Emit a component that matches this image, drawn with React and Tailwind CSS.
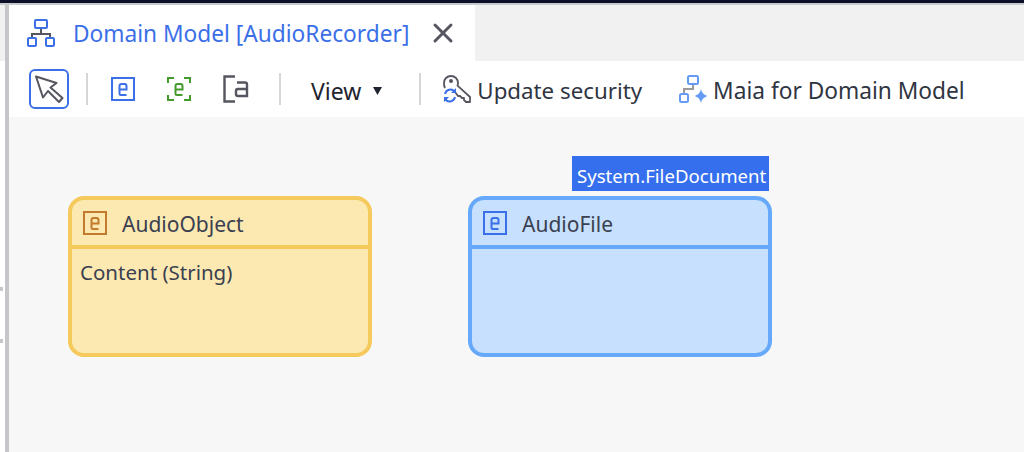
import { X } from 'lucide-react';

const FONT = { fontFamily: '"Noto Sans", sans-serif' };

const E_GLYPH = 'M9 12.5h6.5V9a2 2 0 0 0-2-2h-3A2 2 0 0 0 8.5 9v7.5a1.5 1.5 0 0 0 1.5 1.5h5.5';

// square entity icon with the little "e" inside
function EntityIcon({ color = '#3b6fe8' }) {
  return (
    <svg width="24" height="24" viewBox="0 0 24 24" fill="none" stroke={color} strokeWidth="2" className="shrink-0">
      <rect x="1" y="1" width="22" height="22" />
      <path d={E_GLYPH} />
    </svg>
  );
}

function GreenEntityIcon() {
  return (
    <svg width="24" height="24" viewBox="0 0 24 24" fill="none" stroke="#459a2c" strokeWidth="2" className="shrink-0">
      <path d="M1 6V1h6M17 1h6v5M23 18v5h-6M7 23H1v-5" />
      <path d={E_GLYPH} />
    </svg>
  );
}

function AttributeIcon() {
  return (
    <svg width="26" height="28" viewBox="0 0 26 28" fill="none" stroke="#55565f" strokeWidth="2.4" className="shrink-0">
      <path d="M12 1.5H1.5v25H12" />
      <path d="M14 7.5h8a2 2 0 0 1 2 2V21H15a2 2 0 0 1-2-2v-3a2 2 0 0 1 2-2h9" />
    </svg>
  );
}

function PointerIcon() {
  return (
    <svg width="30" height="30" viewBox="0 0 30 30" fill="none" stroke="#55565f" strokeWidth="2" strokeLinejoin="round">
      <path d="M2 2.5L22.5 9l-6 4.5L28.5 24 25 28 14 17l-5 6.5z" />
    </svg>
  );
}

function SeparatorBar() {
  return <div className="w-[2px] h-8 bg-[#d6d6d6] shrink-0" />;
}

function DomainIcon() {
  return (
    <svg width="28" height="28" viewBox="0 0 28 28" fill="none" className="shrink-0">
      <path d="M14 9v6M5 19v-4h18v4" stroke="#55565f" strokeWidth="2" />
      <rect x="8" y="1" width="12" height="8" rx="1" stroke="#3b6fe8" strokeWidth="2" />
      <rect x="1" y="19" width="8" height="8" rx="1" stroke="#3b6fe8" strokeWidth="2" />
      <rect x="19" y="19" width="8" height="8" rx="1" stroke="#3b6fe8" strokeWidth="2" />
    </svg>
  );
}

function KeyIcon() {
  return (
    <svg width="30" height="30" viewBox="0 0 30 30" fill="none" className="shrink-0">
      <path d="M3 14a9 9 0 0 1-1-5c0-4 3-7 7-7s7 3 7 7c0 1-.2 2-.5 2.7L28 23v5h-4l-2-2v-2h-2l-2-2h-2l-3-4" stroke="#55565f" strokeWidth="1.8" strokeLinejoin="round" />
      <circle cx="9" cy="7" r="2" fill="#55565f" />
      <path d="M3 20a5.5 5.5 0 0 1 9.5-2.5M13 23a5.5 5.5 0 0 1-9.5 2.5" stroke="#3b6fe8" strokeWidth="2" />
      <path d="M14 14v5h-5zM2 28v-5h5z" fill="#3b6fe8" />
    </svg>
  );
}

function MaiaIcon() {
  return (
    <svg width="28" height="28" viewBox="0 0 28 28" fill="none" className="shrink-0">
      <path d="M14 9v5H5v5" stroke="#9a9a9a" strokeWidth="2" />
      <rect x="9" y="1" width="10" height="8" rx="1.5" stroke="#659bf5" strokeWidth="2" />
      <rect x="1" y="19" width="8" height="8" rx="1.5" stroke="#659bf5" strokeWidth="2" />
      <path d="M22 14c1 4 2.5 5.5 6.5 7-4 1.5-5.5 3-6.5 7-1-4-2.5-5.5-6.5-7 4-1.500 5.500-3 6.500-7z" fill="#659bf5" />
    </svg>
  );
}

function EntityCard({ name, attribute, iconColor, className, borderClass, leftClass }) {
  return (
    <div className={`absolute top-[79px] w-[304px] h-[161px] rounded-2xl border-4 flex flex-col ${leftClass} ${className} ${borderClass}`}>
      <div className={`h-[49px] shrink-0 border-b-4 flex items-center pl-[11px] gap-[15px] ${borderClass}`}>
        <EntityIcon color={iconColor} />
        <span className="pt-1 text-[21px] text-[#3a4050]">{name}</span>
      </div>
      {attribute && <p className="pl-2 pt-[9px] text-[20.5px] leading-7 text-[#3a4050]">{attribute}</p>}
    </div>
  );
}

export default function App() {
  return (
    <div className="relative w-[1024px] h-[452px] overflow-hidden flex flex-col bg-[#f7f7f7]" style={FONT}>
      <div className="h-[3px] bg-[#0b1028] shrink-0" />
      <div className="h-[2px] bg-[#c9c9cc] shrink-0" />

      <div className="flex-1 flex min-h-0">
        {/* left gutter */}
        <div className="w-[5px] shrink-0 flex flex-col">
          <div className="h-[56px] bg-[#f1f1f1]" />
          <div className="flex-1 bg-white" />
        </div>
        <div className="w-1 bg-[#c6c6ca] shrink-0" />

        <div className="flex-1 flex flex-col min-w-0">
          {/* tab strip */}
          <div className="h-[56px] shrink-0 bg-[#f1f1f1] flex">
            <div className="w-[466px] bg-white flex items-center pl-[18px]">
              <DomainIcon />
              <span className="ml-[18px] pt-[3px] text-[22.7px] leading-none text-[#3b6fe8] whitespace-nowrap">Domain Model [AudioRecorder]</span>
              <X size={32} strokeWidth={2.2} className="ml-[18px] text-[#55565f] shrink-0" />
            </div>
          </div>

          {/* toolbar */}
          <div className="h-14 shrink-0 bg-white flex items-center pl-5">
            <div className="w-10 h-10 rounded-md border-2 border-[#3b6fe8] flex items-center justify-center shrink-0">
              <PointerIcon />
            </div>
            <div className="ml-[17px]"><SeparatorBar /></div>
            <div className="ml-[23px]"><EntityIcon /></div>
            <div className="ml-8"><GreenEntityIcon /></div>
            <div className="ml-8"><AttributeIcon /></div>
            <div className="ml-[30px]"><SeparatorBar /></div>
            <span className="ml-[30px] pt-1 text-[23px] leading-none text-[#1f2430]">View</span>
            <svg width="9" height="8" viewBox="0 0 9 8" className="ml-3 mt-[3px] shrink-0"><path d="M0 0h9L4.5 8z" fill="#1f2430" /></svg>
            <div className="ml-[37px]"><SeparatorBar /></div>
            <div className="ml-[21px] mr-[5px]"><KeyIcon /></div>
            <span className="pt-1 text-[22.3px] leading-none text-[#2f3542] whitespace-nowrap">Update security</span>
            <div className="ml-[37px] mr-[6px]"><MaiaIcon /></div>
            <span className="pt-1 text-[22.7px] leading-none text-[#2f3542] whitespace-nowrap">Maia for Domain Model</span>
          </div>

          {/* diagram canvas */}
          <div className="flex-1 relative bg-[#f7f7f7]">
            <EntityCard
              name="AudioObject"
              attribute="Content (String)"
              iconColor="#c27b2c"
              leftClass="left-[59px]"
              className="bg-[#fce9b2]"
              borderClass="border-[#f5c95c]"
            />
            <EntityCard
              name="AudioFile"
              iconColor="#3b6fe8"
              leftClass="left-[459px]"
              className="bg-[#c6e0fd]"
              borderClass="border-[#66a9fb]"
            />
            <div className="absolute left-[563px] top-[39px] w-[197px] h-[35px] bg-[#366fee] text-white text-[18.6px] leading-[40px] pl-[5px] whitespace-nowrap">
              System.FileDocument
            </div>
          </div>
        </div>
      </div>

      {/* little marks at the window edge */}
      <div className="absolute left-0 top-[287px] w-[3px] h-1 bg-[#c6c6ca]" />
      <div className="absolute left-0 top-[339px] w-[3px] h-1 bg-[#c6c6ca]" />
    </div>
  );
}
